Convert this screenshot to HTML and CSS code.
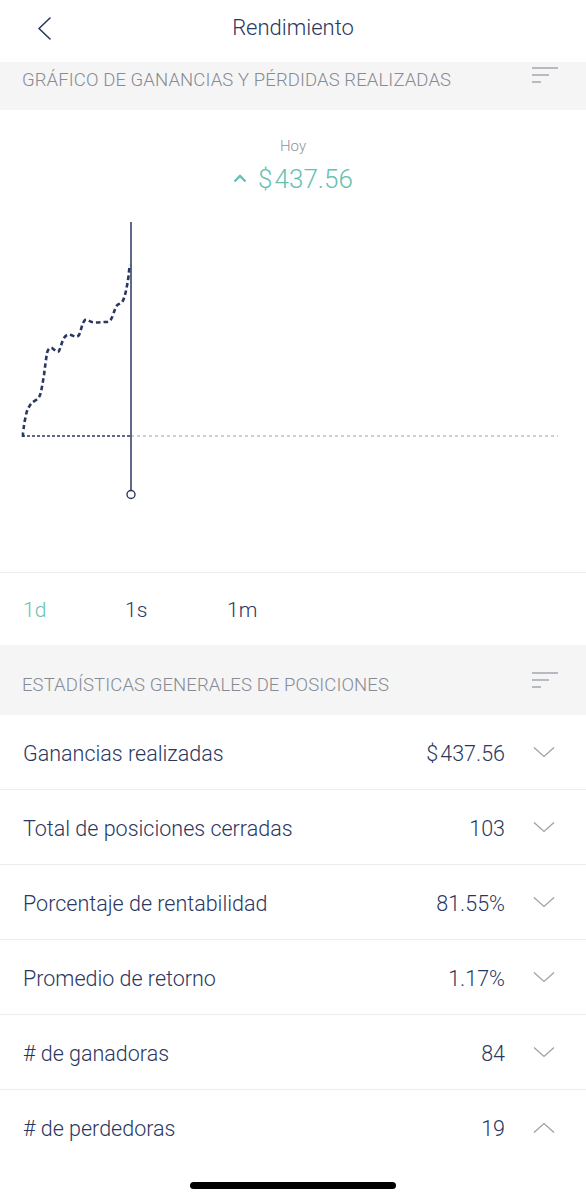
FILE: index.html
```html
<!DOCTYPE html>
<html lang="es">
<head>
<meta charset="utf-8">
<title>Rendimiento</title>
<link rel="stylesheet" href="styles.css">
</head>
<body>
<div class="screen">
  <header class="nav">
    <div class="nav-back">
      <svg width="14" height="24" viewBox="0 0 14 24"><path d="M13 2 L2 12.5 L13 23" fill="none" stroke="#2a3760" stroke-width="1.6" stroke-linecap="round" stroke-linejoin="round"/></svg>
    </div>
    <div class="nav-title">Rendimiento</div>
    <div></div>
  </header>

  <div class="section-head section-head--first">
    <span class="section-title">GRÁFICO DE GANANCIAS Y PÉRDIDAS REALIZADAS</span>
    <svg class="filter-icon" width="26" height="16" viewBox="0 0 26 16"><path d="M0 1 H26 M0 8 H17 M0 15 H9" stroke="#a3a7ae" stroke-width="1.4"/></svg>
  </div>

  <section class="chart">
    <div class="chart-label">Hoy</div>
    <div class="chart-value">
      <svg class="up-icon" width="14" height="9" viewBox="0 0 14 9"><path d="M1.5 7.5 L7 2 L12.5 7.5" fill="none" stroke="#66c1b0" stroke-width="2.4"/></svg>
      <span class="cur">$</span>437.56
    </div>
    <svg class="chart-svg" width="586" height="377" viewBox="0 0 586 377">
      <line x1="131" y1="241" x2="558" y2="241" stroke="#9aa0aa" stroke-width="1.2" stroke-dasharray="3 3"/>
      <line x1="22" y1="241" x2="131" y2="241" stroke="#2a3760" stroke-width="1.6" stroke-dasharray="3 2"/>
      <path d="M23 242 L23 238 C24 232 24 228 25 225 C26 219 27 215 29 212 C31 208 33 207 36 205 C39 203 40 201 41 197 C42 192 43 186 44 180 C45 172 46 164 47 158 C48 154 50 152 52 153 C55 155 57 158 59 156 C61 152 62 146 64 143 C66 140 68 139 71 140 C74 141 77 143 79 140 C81 136 82 128 85 125 C87 124 89 126 92 127 C96 128 101 127 106 127 C110 127 111 125 113 120 C115 114 116 110 119 109 C122 108 123 106 124 103 C126 97 127 91 128 85 C129 79 129 74 130 70" fill="none" stroke="#2a3760" stroke-width="2.6" stroke-dasharray="4.5 3"/>
      <line x1="131" y1="27" x2="131" y2="295" stroke="#2a3760" stroke-width="1.5"/>
      <circle cx="131" cy="299.5" r="4" fill="#fff" stroke="#2a3760" stroke-width="1.4"/>
    </svg>
  </section>

  <nav class="tabs">
    <span class="tab tab--active">1d</span>
    <span class="tab">1s</span>
    <span class="tab">1m</span>
  </nav>

  <div class="section-head">
    <span class="section-title">ESTADÍSTICAS GENERALES DE POSICIONES</span>
    <svg class="filter-icon" width="26" height="16" viewBox="0 0 26 16"><path d="M0 1 H26 M0 8 H17 M0 15 H9" stroke="#a3a7ae" stroke-width="1.4"/></svg>
  </div>

  <ul class="stats">
    <li class="row"><span class="row-label">Ganancias realizadas</span><span class="row-value"><span class="cur">$</span>437.56</span><svg class="chev" width="22" height="12" viewBox="0 0 22 12"><path d="M1 1.5 L11 10.5 L21 1.5" fill="none" stroke="#9da1a9" stroke-width="1.3"/></svg></li>
    <li class="row"><span class="row-label">Total de posiciones cerradas</span><span class="row-value">103</span><svg class="chev" width="22" height="12" viewBox="0 0 22 12"><path d="M1 1.5 L11 10.5 L21 1.5" fill="none" stroke="#9da1a9" stroke-width="1.3"/></svg></li>
    <li class="row"><span class="row-label">Porcentaje de rentabilidad</span><span class="row-value">81.55%</span><svg class="chev" width="22" height="12" viewBox="0 0 22 12"><path d="M1 1.5 L11 10.5 L21 1.5" fill="none" stroke="#9da1a9" stroke-width="1.3"/></svg></li>
    <li class="row"><span class="row-label">Promedio de retorno</span><span class="row-value">1.17%</span><svg class="chev" width="22" height="12" viewBox="0 0 22 12"><path d="M1 1.5 L11 10.5 L21 1.5" fill="none" stroke="#9da1a9" stroke-width="1.3"/></svg></li>
    <li class="row"><span class="row-label"># de ganadoras</span><span class="row-value">84</span><svg class="chev" width="22" height="12" viewBox="0 0 22 12"><path d="M1 1.5 L11 10.5 L21 1.5" fill="none" stroke="#9da1a9" stroke-width="1.3"/></svg></li>
    <li class="row"><span class="row-label"># de perdedoras</span><span class="row-value">19</span><svg class="chev" width="22" height="12" viewBox="0 0 22 12"><path d="M1 10.5 L11 1.5 L21 10.5" fill="none" stroke="#9da1a9" stroke-width="1.3"/></svg></li>
  </ul>

  <div class="home-area"><div class="home-bar"></div></div>
</div>
</body>
</html>
```

FILE: styles.css
```css
* { box-sizing: border-box; }
html, body { margin: 0; padding: 0; background: #fff; }
body {
  font-family: Roboto, "Noto Sans", "Liberation Sans", sans-serif;
  font-weight: 300;
  color: #2a3760;
}
.screen { width: 586px; height: 1200px; overflow: hidden; background: #fff; }

.nav {
  height: 62px;
  display: grid;
  grid-template-columns: 1fr auto 1fr;
  align-items: start;
  padding-top: 16px;
}
.nav-back { padding-left: 37px; height: 24px; }
.nav-back svg { display: block; }
.nav-title { font-size: 22px; line-height: 24px; color: #2a3760; }

.section-head {
  background: #f5f5f6;
  height: 70px;
  padding: 30px 28px 0 22px;
  display: flex;
  justify-content: space-between;
  align-items: flex-start;
}
.section-head--first { height: 48px; padding-top: 8px; }
.section-title {
  font-size: 18.5px;
  line-height: 20px;
  color: #878b94;
  letter-spacing: 0.1px;
}
.filter-icon { display: block; margin-top: -3px; }

.chart { height: 463px; padding-top: 26px; border-bottom: 1px solid #ececee; }
.chart-label { text-align: center; font-size: 15px; line-height: 20px; color: #8f939b; }
.chart-value {
  margin-top: 7px;
  height: 32px;
  display: flex;
  align-items: center;
  justify-content: center;
  font-size: 26px;
  line-height: 32px;
  color: #66c1b0;
}
.up-icon { display: block; margin-right: 11px; margin-top: -2px; }
.cur { margin-right: 2px; }
.chart-svg { display: block; }

.tabs {
  height: 72px;
  display: flex;
  align-items: center;
  padding-left: 23px;
  padding-top: 2px;
}
.tab { font-size: 21px; line-height: 24px; color: #2a3760; width: 102px; }
.tab--active { color: #66c1b0; }

.stats { list-style: none; margin: 0; padding: 0; }
.row {
  height: 75px;
  display: flex;
  align-items: center;
  padding-left: 23px;
  padding-right: 31px;
  padding-top: 3px;
  border-bottom: 1px solid #ececee;
}
.row:last-child { border-bottom: none; }
.row-label { flex: 1; font-size: 21.5px; line-height: 24px; color: #2a3760; }
.row-value { font-size: 21.5px; line-height: 24px; color: #2a3760; }
.chev { display: block; margin-left: 28px; margin-top: -3px; }

.home-area { height: 35px; display: flex; justify-content: center; padding-top: 17px; }
.home-bar { width: 206px; height: 7px; border-radius: 4px; background: #000; }
```
